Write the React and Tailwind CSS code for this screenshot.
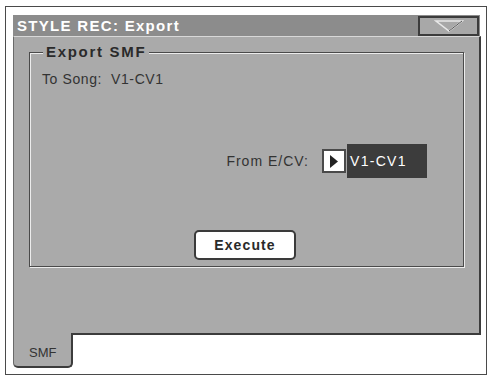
import React from "react";

const font = { fontFamily: '"Liberation Sans", Arial, sans-serif' };

export default function App() {
  return (
    <div className="w-[489px] h-[376px] bg-white pt-[6px] pl-[5px]" style={font}>
      <div className="w-[482px] h-[369px] border border-[#4a4a4a] pt-[8px] pl-[7px] flex flex-col">
        {/* title bar */}
        <div className="w-[467px] h-[21px] bg-[#8c8c8c] flex items-center justify-between">
          <span className="pl-[4px] text-[15px] font-bold text-white tracking-[1.3px] leading-none">
            STYLE REC: Export
          </span>
          <div className="w-[61px] h-[20px] border-2 border-[#3c3c3c] bg-[#a8a8a8] flex items-center justify-center mr-[1px]">
            <svg width="30" height="12" viewBox="0 0 30 12">
              <path d="M2 1 L28 1 L15 11 Z" fill="none" stroke="#e8e8e8" strokeWidth="1.5" />
              <path d="M28 1 L15 11" stroke="#555" strokeWidth="1" />
            </svg>
          </div>
        </div>

        {/* panel */}
        <div className="w-[468px] h-[299px] bg-[#aaaaaa] border-t border-l border-t-[#d8d8d8] border-l-[#6a6a6a] border-r-2 border-b-2 border-r-[#3c3c3c] border-b-[#3c3c3c] pt-[15px] pl-[15px]">
          <div className="relative w-[435px] h-[215px] border border-[#4a4a4a] shadow-[inset_1px_1px_0_#ececec,1px_1px_0_#ececec]">
            <span className="absolute left-[13px] top-[-10px] bg-[#aaaaaa] px-[3px] text-[15px] font-bold text-[#2a2a2a] leading-[18px] tracking-[1.7px]">
              Export SMF
            </span>
            <div className="pt-[19px] pl-[12px] text-[14px] text-[#333] leading-none tracking-[0.6px]">
              To Song:&nbsp;&nbsp;V1-CV1
            </div>
            <div className="mt-[58px] flex items-center justify-end pr-[36px]">
              <span className="text-[14px] text-[#333] mr-[13px] leading-none tracking-[1px]">From E/CV:</span>
              <div className="w-[24px] h-[24px] border-2 border-[#4a4a4a] bg-white flex items-center justify-center mr-[1px]">
                <svg width="10" height="13" viewBox="0 0 10 13">
                  <path d="M1 0 L9 6.5 L1 13 Z" fill="#222" />
                </svg>
              </div>
              <div className="w-[80px] h-[34px] bg-[#3c3c3c] flex items-center pl-[3px] text-[14px] text-white tracking-[1.3px]">
                V1-CV1
              </div>
            </div>
            <div className="mt-[52px] flex justify-center pr-[3px]">
              <div className="w-[102px] h-[30px] bg-white border-2 border-[#3a3a3a] rounded-[5px] flex items-center justify-center text-[14px] font-bold text-[#2a2a2a] tracking-[1.1px]">
                Execute
              </div>
            </div>
          </div>
        </div>

        {/* tab */}
        <div className="w-[60px] h-[35px] bg-[#aaaaaa] border-l border-l-[#6a6a6a] border-r-2 border-b-2 border-r-[#3c3c3c] border-b-[#3c3c3c] rounded-b-[5px] mt-[-2px] flex items-center pl-[15px] text-[13px] text-[#333] pt-[6px]">
          SMF
        </div>
      </div>
    </div>
  );
}
